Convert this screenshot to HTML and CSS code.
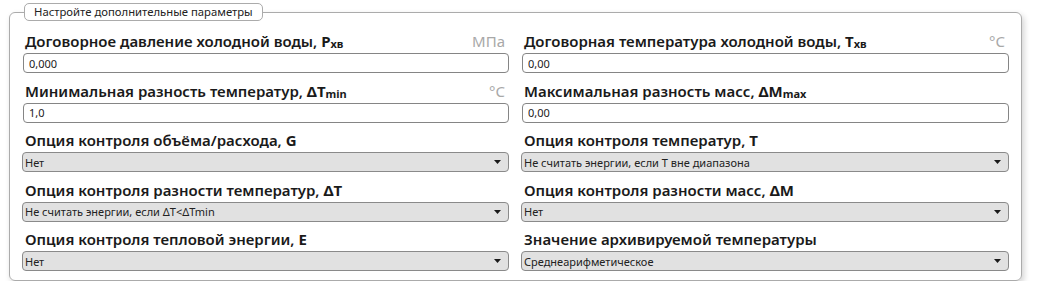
FILE: index.html
```html
<!DOCTYPE html>
<html lang="ru">
<head>
  <meta charset="UTF-8" />
  <meta name="viewport" content="width=device-width, initial-scale=1.0"/>
  <title>Дополнительные параметры</title>
  <link rel="stylesheet" href="styles.css">
</head>
<body>

  <fieldset class="panel">
    <legend class="panel-title">Настройте дополнительные параметры</legend>
    <div class="grid">

      <div class="field">
        <div class="field-head"><span class="field-label">Договорное давление холодной воды, <b>P<sub>хв</sub></b></span><span class="field-unit">МПа</span></div>
        <input class="field-input" type="text" value="0,000" />
      </div>
      <div class="field">
        <div class="field-head"><span class="field-label">Договорная температура холодной воды, <b>T<sub>хв</sub></b></span><span class="field-unit">°C</span></div>
        <input class="field-input" type="text" value="0,00" />
      </div>

      <div class="field">
        <div class="field-head"><span class="field-label">Минимальная разность температур, <b>ΔT<sub>min</sub></b></span><span class="field-unit">°C</span></div>
        <input class="field-input" type="text" value="1,0" />
      </div>
      <div class="field">
        <div class="field-head"><span class="field-label">Максимальная разность масс, <b>ΔM<sub>max</sub></b></span></div>
        <input class="field-input" type="text" value="0,00" />
      </div>

      <div class="field">
        <div class="field-head"><span class="field-label">Опция контроля объёма/расхода, <b>G</b></span></div>
        <div class="combo"><span>Нет</span><svg width="7" height="4" viewBox="0 0 7 4"><path d="M0 0h7L3.5 4z"/></svg></div>
      </div>
      <div class="field">
        <div class="field-head"><span class="field-label">Опция контроля температур, <b>T</b></span></div>
        <div class="combo"><span>Не считать энергии, если T вне диапазона</span><svg width="7" height="4" viewBox="0 0 7 4"><path d="M0 0h7L3.5 4z"/></svg></div>
      </div>

      <div class="field">
        <div class="field-head"><span class="field-label">Опция контроля разности температур, <b>ΔT</b></span></div>
        <div class="combo"><span>Не считать энергии, если ΔT&lt;ΔTmin</span><svg width="7" height="4" viewBox="0 0 7 4"><path d="M0 0h7L3.5 4z"/></svg></div>
      </div>
      <div class="field">
        <div class="field-head"><span class="field-label">Опция контроля разности масс, <b>ΔM</b></span></div>
        <div class="combo"><span>Нет</span><svg width="7" height="4" viewBox="0 0 7 4"><path d="M0 0h7L3.5 4z"/></svg></div>
      </div>

      <div class="field">
        <div class="field-head"><span class="field-label">Опция контроля тепловой энергии, <b>E</b></span></div>
        <div class="combo"><span>Нет</span><svg width="7" height="4" viewBox="0 0 7 4"><path d="M0 0h7L3.5 4z"/></svg></div>
      </div>
      <div class="field">
        <div class="field-head"><span class="field-label">Значение архивируемой температуры</span></div>
        <div class="combo"><span>Среднеарифметическое</span><svg width="7" height="4" viewBox="0 0 7 4"><path d="M0 0h7L3.5 4z"/></svg></div>
      </div>

    </div>
  </fieldset>

</body>
</html>
```

FILE: styles.css
```css
body {
  margin: 0;
  background: #fff;
  font-family: "Noto Sans", "Open Sans", sans-serif;
  color: #1e1e1e;
}
.panel {
  box-sizing: border-box;
  width: 1013px;
  margin: 3px 0 0 9px;
  padding: 2.5px 12px 9px 13px;
  border: 1px solid #ababab;
  border-radius: 6px;
  box-shadow: 2px 3px 6px rgba(0,0,0,0.18);
  min-inline-size: 0;
}
.panel-title {
  margin-left: 1px;
  padding: 0 9px;
  height: 18px;
  box-sizing: border-box;
  border: 1px solid #ababab;
  border-radius: 5px;
  background: #fff;
  font-size: 11.3px;
  line-height: 16px;
  color: #222;
}
.grid {
  display: grid;
  grid-template-columns: 486px 487px;
  column-gap: 13px;
}
.field {
  display: flex;
  flex-direction: column;
}
.field-head {
  height: 29.5px;
  display: flex;
  justify-content: space-between;
  align-items: flex-end;
  padding: 0 4px 2px 2px;
  box-sizing: border-box;
  font-size: 15px;
  line-height: 20px;
  white-space: nowrap;
}
.field-label {
  font-weight: 600;
  color: #1a1a1a;
}
.field-label b {
  font-weight: 700;
}
.field-label sub {
  font-size: 11px;
  vertical-align: -1px;
  line-height: 0;
}
.field-unit {
  color: #a8a8a8;
  font-weight: 400;
}
.field-input {
  box-sizing: border-box;
  width: 100%;
  height: 20px;
  margin: 0;
  padding: 0 5px;
  border: 1px solid #858585;
  border-radius: 4px;
  background: #fff;
  font-family: inherit;
  font-size: 11px;
  color: #222;
  outline: none;
}
.combo {
  box-sizing: border-box;
  height: 20px;
  margin-left: -1px;
  display: flex;
  align-items: center;
  justify-content: space-between;
  padding: 0 7px 0 2px;
  border: 1px solid #8a8a8a;
  border-radius: 4px;
  background: #e1e1e1;
  font-size: 11px;
  color: #222;
}
.combo svg {
  fill: #1a1a1a;
}
```
